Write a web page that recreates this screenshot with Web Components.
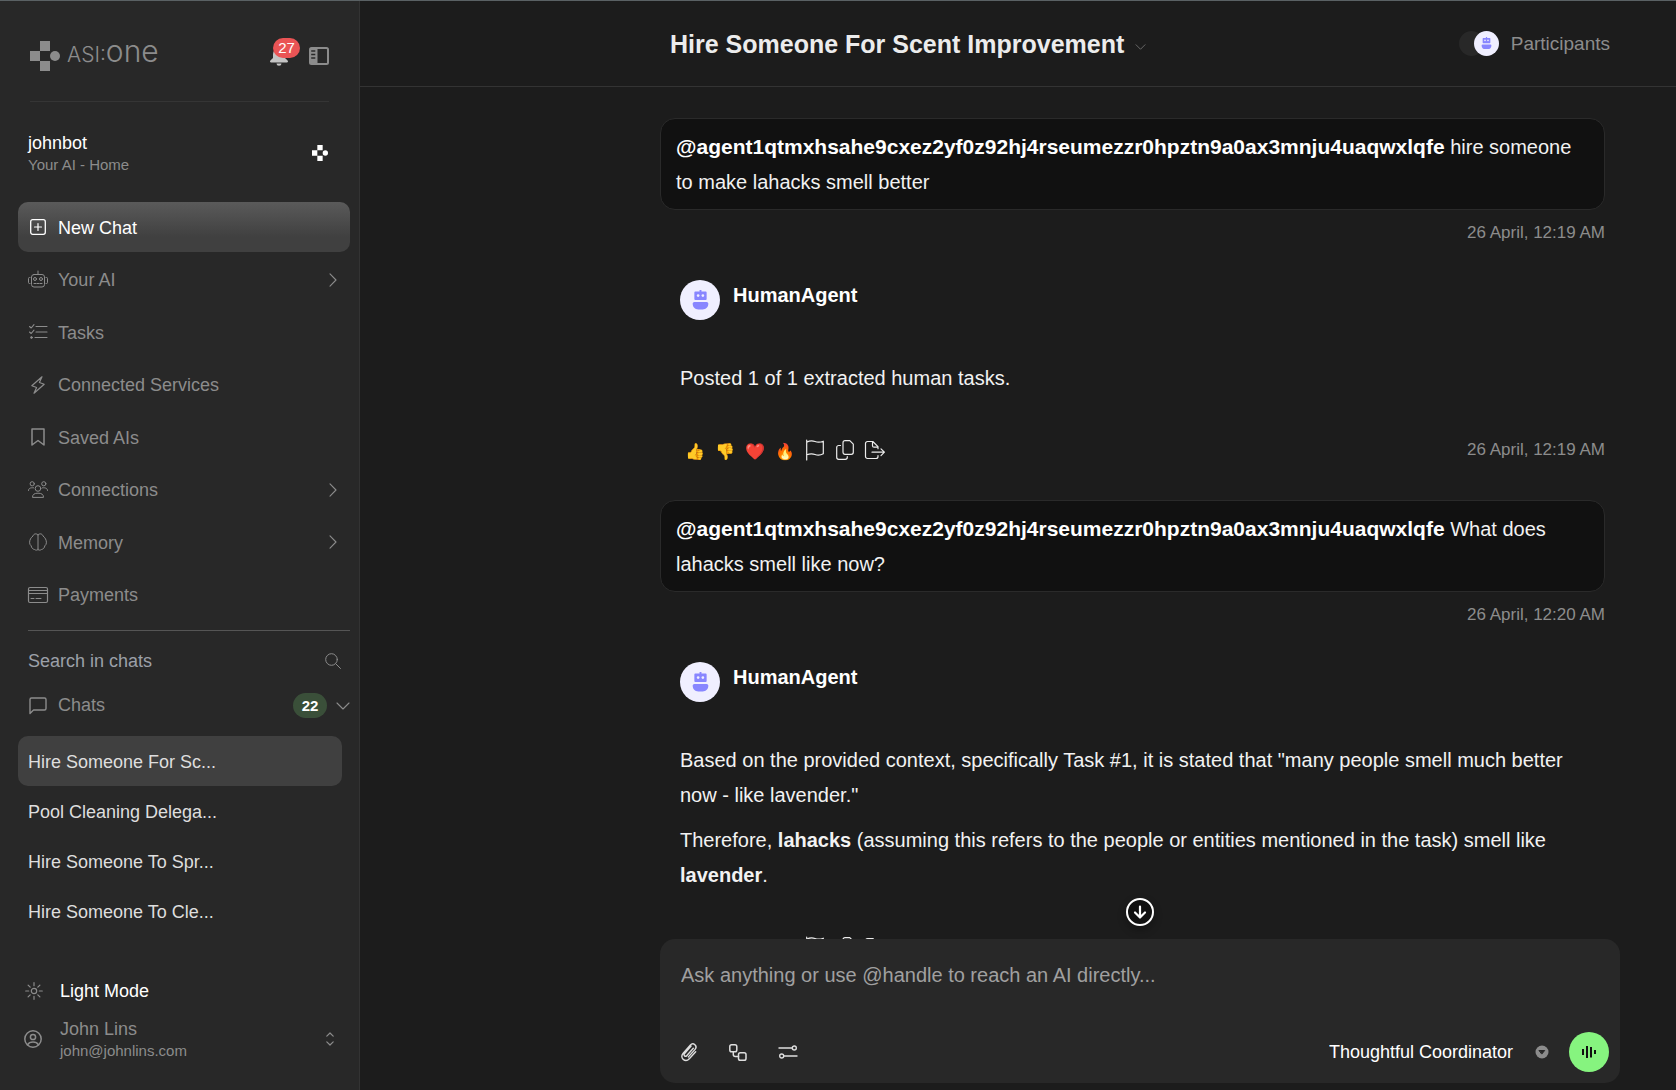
<!DOCTYPE html>
<html lang="en">
<head>
<meta charset="utf-8">
<meta name="viewport" content="width=device-width, initial-scale=1">
<title>ASI:One</title>
<style>
  html, body {
    height: 100%;
    margin: 0;
  }
  body {
    background: #1c1c1c;
    color: #fff;
    font-family: "Liberation Sans", Arial, sans-serif;
    font-size: 18px;
    overflow: hidden;
  }
</style>
</head>
<body>
<chat-app></chat-app>

<script>
// every icon of the app, [width, height, markup]
const ICONS = {
  logo: [30, 30, `<g fill="currentColor" stroke="none"><path d="M10 0h10v10H10zM0 10h10v10H0zM10 20h10v10H10z"/><circle cx="25" cy="15" r="5"/></g>`],
  bell: [18, 20, `<g fill="currentColor" stroke="none"><path d="M9 1a2 2 0 0 1 1.800 1.600C13.500 3.500 15 5.800 15 8.500V12l2.600 2.600c.8.800.4 1.900-.7 1.900H1.100c-1.100 0-1.500-1.100-.7-1.900L3 12V8.500C3 5.800 4.500 3.500 7.200 2.600A2 2 0 0 1 9 1z"/><path d="M6.500 17.500h5a2.500 2.200 0 0 1-5 0z"/></g>`],
  panel: [20, 18, `<rect x="1" y="1" width="18" height="16" rx="1.500" stroke-width="2"/><path d="M1 1h7.500v16H1z" fill="currentColor" stroke="none"/><path d="M3 4h2.500M3 7.500h2.500M3 11h2.500" stroke="#282828" stroke-width="1.600" stroke-linecap="square"/>`],
  plus: [16, 16, `<rect x=".7" y=".7" width="14.600" height="14.600" rx="2" stroke-width="1.300"/><path d="M8 4.500v7M4.500 8h7" stroke-width="1.200"/>`],
  robot: [20, 17, `<rect x="3.500" y="3.500" width="13" height="12.500" rx="2.500"/><path d="M10 0v3.500M2 6.500H1.500a1 1 0 0 0-1 1v4a1 1 0 0 0 1 1H2M18 6.500h.5a1 1 0 0 1 1 1v4a1 1 0 0 1-1 1H18M6 12.500h2M9 12.500h2M12 12.500h2"/><circle cx="7" cy="8" r="1.500"/><circle cx="13" cy="8" r="1.500"/>`],
  tasks: [18, 16, `<path d="M.5 2.500l1.700 1.500L5 .7M.5 8l1.700 1.500L5 6.200M7 2.500h11M7 8h11M6 13.500h12" stroke-width="1.100"/><circle cx="2.500" cy="13.500" r=".9" fill="currentColor"/>`],
  bolt: [14, 18, `<path d="M11 .8L.8 9.700l4.800 1.800L3 17.200l10.200-8.900-4.800-1.800z" stroke-width="1.200"/>`],
  bookmark: [14, 18, `<path d="M1 1h12v16l-6-4.500L1 17z" stroke-width="1.500"/>`],
  people: [20, 17, `<circle cx="10" cy="7.500" r="2.800"/><circle cx="4.200" cy="2.800" r="2.100"/><circle cx="15.800" cy="2.800" r="2.100"/><path d="M4.500 16c0-2.700 2-3.800 5.500-3.800s5.500 1.100 5.500 3.800zM.5 9.500C.5 7.500 2 6.500 5.500 6.800M19.500 9.500c0-2-1.500-3-5-2.700"/>`],
  brain: [18, 18, `<path d="M9 1.500v15M9 1.800C7.500.2 4.700.5 4 3 1.900 4.500.5 7 .6 9.800c.1 1.500.8 2.500 1.600 3 .2 2 1.600 3.400 3.300 3.700 1.500 1 2.800.8 3.500 0M9 1.800c1.500-1.600 4.300-1.300 5 1.200 2.100 1.500 3.500 4 3.400 6.800-.1 1.500-.8 2.500-1.600 3-.2 2-1.600 3.400-3.300 3.700-1.500 1-2.800.8-3.500 0"/>`],
  card: [20, 16, `<rect x=".5" y=".5" width="19" height="15" rx="1.500" stroke-width="1.200"/><path d="M.5 3.500h19M.5 6.500h19M3 11.500h3M8 11.500h5"/>`],
  search: [16, 16, `<circle cx="6.500" cy="6.500" r="5.800"/><path d="M10.800 10.800l4.700 4.700"/>`],
  chat: [18, 18, `<path d="M1 16.500V2.500A1.500 1.500 0 0 1 2.500 1h13A1.500 1.500 0 0 1 17 2.500v9a1.500 1.500 0 0 1-1.500 1.500H4.500z" stroke-width="1.400"/>`],
  right: [8, 14, `<path d="M1 .8L7 7l-6 6.200" stroke-width="1.100"/>`],
  down: [14, 8, `<path d="M1 1l6 6 6-6" stroke-width="1.100"/>`],
  updown: [8, 14, `<path d="M.8 4.200L4 1l3.200 3.200M.8 9.800L4 13l3.200-3.200" stroke-width="1.200"/>`],
  sun: [18, 18, `<circle cx="9" cy="9" r="2.700" stroke-width="1.200"/><path d="M9 .7v3M9 14.300v3M.7 9h3M14.300 9h3M3.100 3.100l2.100 2.100M12.800 12.800l2.100 2.100M3.100 14.900l2.100-2.100M12.800 5.200l2.100-2.100" stroke-width="1.200"/>`],
  user: [18, 18, `<circle cx="9" cy="9" r="8.200" stroke-width="1.500"/><circle cx="9" cy="7" r="2.600" stroke-width="1.500"/><path d="M3.500 14.800c1.200-2 3-2.800 5.500-2.800s4.300.8 5.500 2.800" stroke-width="1.500"/>`],
  bot: [18, 22, `<g stroke="none"><path fill="#8886ff" d="M8 0h2v2h-2zM3.500 1.500h11a1 1 0 0 1 1 1v7a1 1 0 0 1-1 1h-11a1 1 0 0 1-1-1v-7a1 1 0 0 1 1-1zM2.500 12.500h13a1.800 1.800 0 0 1 1.800 1.800c0 4-2.500 6.200-6 6.200H6.700c-3.500 0-6-2.200-6-6.200a1.800 1.800 0 0 1 1.800-1.800z"/><circle cx="6.500" cy="5.800" r="1.400" fill="#f0efff"/><circle cx="11.500" cy="5.800" r="1.400" fill="#f0efff"/></g>`],
  flag: [18, 20, `<path d="M.7 0v20M.7 2.200c3-1.600 5.800-1.600 8.300-.7s5.300.9 8.300-.3v12.600c-3 1.700-5.800 1.700-8.300.7s-5.300-.9-8.300.3" stroke-width="1.200"/>`],
  copy: [18, 20, `<path d="M9.500.7h4.300l3.500 3.500v8.100a2 2 0 0 1-2 2H9a2 2 0 0 1-2-2v-9.600a2 2 0 0 1 2-2z" stroke-width="1.200"/><path d="M4.500 5.500H2.700a2 2 0 0 0-2 2v9.800a2 2 0 0 0 2 2h6.600a2 2 0 0 0 2-2v-.8" stroke-width="1.200"/>`],
  share: [20, 18, `<path d="M13 14.500v1a2 2 0 0 1-2 2H2.500a2 2 0 0 1-2-2v-13a2 2 0 0 1 2-2h5.300L13 5.700v2M7.500.7v4a1.500 1.500 0 0 0 1.500 1.500h4M7 11.200h12.300M16 7.800l3.400 3.400-3.400 3.400" stroke-width="1.200"/>`],
  scroll: [28, 28, `<circle cx="14" cy="14" r="13" fill="#111" stroke-width="2"/><path d="M14 8.500V19M9 14.500l5 5 5-5" stroke-width="2.200"/>`],
  clip: [16, 18, `<path d="M12.300 5.300l-6.600 7.400a1.500 1.500 0 0 1-2.300-2l6.700-7.600M14.700 8.700l-6.400 7C6.500 17.700 4 17.800 2.200 16.400.4 14.800.4 12.300 2 10.500l7.200-8.200c1.300-1.500 3.300-1.700 4.700-.5 1.400 1.300 1.400 3.200.2 4.600l-6.700 7.500" stroke-width="1.400"/>`],
  flow: [18, 17, `<rect x=".8" y=".8" width="7" height="7" rx="1.800" stroke-width="1.500"/><rect x="9.500" y="8.800" width="7.500" height="7.500" rx="1.800" stroke-width="1.500"/><path d="M4.300 7.800v2.700a2 2 0 0 0 2 2h3.200" stroke-width="1.500"/>`],
  sliders: [18, 14, `<path d="M0 3h13.500M5 11h13" stroke-width="1.400"/><circle cx="15.300" cy="3" r="2" stroke-width="1.400"/><circle cx="2.700" cy="11" r="2" stroke-width="1.400"/>`],
  caret: [14, 14, `<circle cx="7" cy="7" r="6.500" fill="#8c8c8c" stroke="none"/><path d="M4.300 5.500h5.400L7 8.800z" fill="#282828" stroke="#282828"/>`],
  voice: [16, 14, `<path d="M2 4v6M6 1v12M10 2v10.500M14 5v4" stroke-width="2" stroke-linecap="butt"/>`]
};

class AppIcon extends HTMLElement {
  constructor() {
    super();
    this.attachShadow({ mode: "open" });
  }

  connectedCallback() {
    const [width, height, markup] = ICONS[this.getAttribute("name")];
    const shownWidth = Number(this.getAttribute("width")) || width;
    const shownHeight = Math.round(shownWidth * height / width);

    this.shadowRoot.innerHTML = `
      <style>
        :host { display: inline-flex; flex: none; }
        svg { display: block; overflow: visible; }
      </style>
      <svg width="${shownWidth}" height="${shownHeight}" viewBox="0 0 ${width} ${height}" fill="none"
        stroke="currentColor" stroke-linecap="round" stroke-linejoin="round" aria-hidden="true">${markup}</svg>
    `;
  }
}

customElements.define("app-icon", AppIcon);

class BotAvatar extends HTMLElement {
  constructor() {
    super();
    this.attachShadow({ mode: "open" }).innerHTML = `
      <style>
        :host {
          display: inline-flex;
          align-items: center;
          justify-content: center;
          flex: none;
          width: 40px;
          height: 40px;
          border-radius: 50%;
          background: #f0efff;
        }
        :host([small]) { width: 25px; height: 25px; }
      </style>
      <app-icon name="bot" width="${this.hasAttribute("small") ? 11 : 17}"></app-icon>
    `;
  }
}

class NavItem extends HTMLElement {
  constructor() {
    super();
    this.attachShadow({ mode: "open" });
  }

  connectedCallback() {
    this.shadowRoot.innerHTML = `
      <style>
        :host { display: block; color: #8c8c8c; }
        a {
          display: flex;
          align-items: center;
          height: 50px;
          padding: 0 13px 0 10px;
          border-radius: 10px;
          color: inherit;
          text-decoration: none;
        }
        .icon {
          display: flex;
          justify-content: center;
          width: 20px;
          margin-right: 10px;
        }
        .label { flex: 1; padding-top: 2px; }
        :host([active]) { color: #fff; }
        :host([active]) a { background: linear-gradient(#5a5a5a, #404040 70%); }
      </style>
      <a href="#">
        <span class="icon"><app-icon name="${this.getAttribute("icon")}"></app-icon></span>
        <span class="label"><slot></slot></span>
        ${this.hasAttribute("expandable") ? `<app-icon name="right"></app-icon>` : ""}
      </a>
    `;
  }
}

customElements.define("nav-item", NavItem);

class ChatLink extends HTMLElement {
  constructor() {
    super();
    this.attachShadow({ mode: "open" }).innerHTML = `
      <style>
        :host { display: block; }
        a {
          display: flex;
          align-items: center;
          box-sizing: border-box;
          height: 50px;
          padding: 2px 10px 0;
          border-radius: 10px;
          color: #dedede;
          text-decoration: none;
        }
        :host([active]) a { background: #404040; }
      </style>
      <a href="#"><slot></slot></a>
    `;
  }
}

customElements.define("chat-link", ChatLink);

class SideBar extends HTMLElement {
  constructor() {
    super();
    this.attachShadow({ mode: "open" }).innerHTML = `
      <style>
        :host {
          display: flex;
          flex-direction: column;
          box-sizing: border-box;
          width: 360px;
          flex: none;
          padding: 0 9px 0 18px;
          border-right: 1px solid #333;
          background: #282828;
          color: #8c8c8c;
        }
        button {
          display: flex;
          padding: 0;
          border: 0;
          background: none;
          color: inherit;
          font: inherit;
          text-align: left;
        }
        .top {
          display: flex;
          align-items: center;
          height: 90px;
          padding-top: 10px;
          margin: 0 21px 0 12px;
          border-bottom: 1px solid #353535;
        }
        .brand {
          display: flex;
          align-items: center;
          flex: 1;
          gap: 7px;
          color: #8c8c8c;
          text-decoration: none;
        }
        .word {
          font-family: Inter, sans-serif;
          font-weight: 300;
          font-size: 30px;
          line-height: 30px;
          padding-bottom: 7px;
        }
        .word small { font-size: 21px; }
        .bell {
          position: relative;
          margin-right: 21px;
          color: #c4c4c4;
        }
        .count {
          position: absolute;
          left: 3px;
          bottom: 8px;
          width: 27px;
          border-radius: 10px;
          background: #ea5455;
          color: #fff;
          font-size: 15px;
          line-height: 20px;
          text-align: center;
        }
        .home {
          display: flex;
          align-items: center;
          justify-content: space-between;
          padding: 30px 22px 28px 10px;
        }
        .home strong, .user strong {
          display: block;
          font-weight: 400;
          line-height: 23px;
        }
        .home strong { color: #fff; }
        small { font-size: 15px; }
        .home small, .user small {
          display: block;
          line-height: 19px;
        }
        .home app-icon { color: #fff; }
        nav {
          display: flex;
          flex-direction: column;
          justify-content: space-between;
          min-height: 418px;
        }
        .search {
          display: flex;
          align-items: center;
          margin: 10px 0 0 10px;
          padding: 15px 9px 14px 0;
          border-top: 1px solid #555;
        }
        input {
          flex: 1;
          min-width: 0;
          height: 30px;
          padding: 0;
          border: 0;
          outline: 0;
          background: none;
          color: #fff;
          font: inherit;
        }
        input::placeholder { color: #9ca0a8; }
        .chats {
          display: flex;
          align-items: center;
          padding: 3px 0 18px 11px;
        }
        .chats span { flex: 1; margin-left: 11px; }
        .chats b {
          margin-right: 9px;
          width: 34px;
          border-radius: 13px;
          background: #3a4f39;
          color: #fff;
          font-size: 15px;
          line-height: 25px;
          text-align: center;
        }
        .list { flex: 1; padding-right: 8px; }
        .mode {
          align-items: center;
          gap: 17px;
          margin: 0 0 15px 7px;
          color: #fff;
          line-height: 24px;
        }
        .mode app-icon { color: #8c8c8c; }
        .user {
          align-items: center;
          gap: 18px;
          padding: 0 16px 0 6px;
          margin-bottom: 30px;
        }
        .user div { flex: 1; }
      </style>
      <div class="top">
        <a class="brand" href="#">
          <app-icon name="logo"></app-icon>
          <span class="word"><small>ASI:</small>one</span>
        </a>
        <button class="bell" aria-label="Notifications">
          <app-icon name="bell"></app-icon>
          <span class="count">27</span>
        </button>
        <button aria-label="Toggle sidebar"><app-icon name="panel"></app-icon></button>
      </div>
      <div class="home">
        <div>
          <strong>johnbot</strong>
          <small>Your AI - Home</small>
        </div>
        <app-icon name="logo" width="16"></app-icon>
      </div>
      <nav>
        <nav-item icon="plus" active>New Chat</nav-item>
        <nav-item icon="robot" expandable>Your AI</nav-item>
        <nav-item icon="tasks">Tasks</nav-item>
        <nav-item icon="bolt">Connected Services</nav-item>
        <nav-item icon="bookmark">Saved AIs</nav-item>
        <nav-item icon="people" expandable>Connections</nav-item>
        <nav-item icon="brain" expandable>Memory</nav-item>
        <nav-item icon="card">Payments</nav-item>
      </nav>
      <div class="search">
        <input type="text" placeholder="Search in chats" aria-label="Search in chats">
        <app-icon name="search"></app-icon>
      </div>
      <button class="chats">
        <app-icon name="chat"></app-icon>
        <span>Chats</span>
        <b>22</b>
        <app-icon name="down"></app-icon>
      </button>
      <div class="list">
        <chat-link active>Hire Someone For Sc...</chat-link>
        <chat-link>Pool Cleaning Delega...</chat-link>
        <chat-link>Hire Someone To Spr...</chat-link>
        <chat-link>Hire Someone To Cle...</chat-link>
      </div>
      <button class="mode"><app-icon name="sun"></app-icon>Light Mode</button>
      <button class="user">
        <app-icon name="user"></app-icon>
        <div>
          <strong>John Lins</strong>
          <small>john@johnlins.com</small>
        </div>
        <app-icon name="updown"></app-icon>
      </button>
    `;
  }
}

class ChatHeader extends HTMLElement {
  constructor() {
    super();
    this.attachShadow({ mode: "open" }).innerHTML = `
      <style>
        :host {
          display: flex;
          align-items: center;
          justify-content: space-between;
          height: 85px;
          flex: none;
          padding: 0 66px 0 310px;
          border-bottom: 1px solid #333;
        }
        button {
          display: flex;
          align-items: center;
          padding: 0;
          border: 0;
          background: none;
          color: #8c8c8c;
          font: inherit;
        }
        h1 {
          margin: 0 11px 0 0;
          color: #ececec;
          font-size: 25px;
          line-height: 30px;
        }
        .title { color: #777; }
        .title app-icon { padding-top: 6px; }
        .people { gap: 12px; font-size: 19px; }
        .stack { display: flex; }
        .blank {
          width: 25px;
          height: 25px;
          margin-right: -10px;
          border-radius: 50%;
          background: #282828;
        }
      </style>
      <button class="title">
        <h1><slot></slot></h1>
        <app-icon name="down" width="11"></app-icon>
      </button>
      <button class="people">
        <span class="stack"><span class="blank"></span><bot-avatar small></bot-avatar></span>
        Participants
      </button>
    `;
  }
}

class UserMessage extends HTMLElement {
  constructor() {
    super();
    this.attachShadow({ mode: "open" });
  }

  connectedCallback() {
    this.shadowRoot.innerHTML = `
      <style>
        :host { display: block; }
        .bubble {
          padding: 11px 15px 9px;
          border: 1px solid #2a2a2a;
          border-radius: 15px;
          background: #111;
          color: #f2f2f2;
          font-size: 20px;
          line-height: 35px;
        }
        /* the larger mention must not make its line taller */
        ::slotted(b) { color: #fff; font-size: 21px; line-height: 1; }
        time {
          display: block;
          margin-top: 10px;
          color: #8c8c8c;
          font-size: 17px;
          line-height: 25px;
          text-align: right;
        }
      </style>
      <div class="bubble"><slot></slot></div>
      <time>${this.getAttribute("time")}</time>
    `;
  }
}

class AgentMessage extends HTMLElement {
  constructor() {
    super();
    this.attachShadow({ mode: "open" });
  }

  connectedCallback() {
    this.shadowRoot.innerHTML = `
      <style>
        :host { display: block; padding: 35px 0 40px 20px; }
        .head { display: flex; gap: 13px; }
        h2 {
          margin: 0;
          font-size: 20px;
          line-height: 30px;
        }
        .body {
          display: flex;
          flex-direction: column;
          gap: 10px;
          margin: 41px 15px 44px 0;
          color: #f2f2f2;
          font-size: 20px;
          line-height: 35px;
        }
        ::slotted(p) { margin: 0; }
        .actions {
          display: flex;
          align-items: center;
          height: 20px;
        }
        button {
          display: flex;
          align-items: center;
          justify-content: center;
          width: 30px;
          height: 20px;
          padding: 0;
          border: 0;
          background: none;
          color: #ececec;
          font-size: 16px;
          line-height: 20px;
        }
        .emoji { padding-top: 3px; }
        time { margin-left: auto; color: #8c8c8c; font-size: 17px; }
      </style>
      <div class="head"><bot-avatar></bot-avatar><h2>${this.getAttribute("name")}</h2></div>
      <div class="body"><slot></slot></div>
      <div class="actions">
        <button class="emoji" aria-label="Like">👍</button>
        <button class="emoji" aria-label="Dislike">👎</button>
        <button class="emoji" aria-label="Love">❤️</button>
        <button class="emoji" aria-label="Fire">🔥</button>
        <button aria-label="Report"><app-icon name="flag"></app-icon></button>
        <button aria-label="Copy"><app-icon name="copy"></app-icon></button>
        <button aria-label="Share"><app-icon name="share"></app-icon></button>
        <time>${this.getAttribute("time")}</time>
      </div>
    `;
  }
}

class ChatComposer extends HTMLElement {
  constructor() {
    super();
    this.attachShadow({ mode: "open" }).innerHTML = `
      <style>
        :host { display: block; position: relative; }
        form {
          padding: 20px 11px 11px 21px;
          border-radius: 15px;
          background: #282828;
        }
        textarea {
          display: block;
          box-sizing: border-box;
          width: 100%;
          height: 73px;
          padding: 0;
          border: 0;
          outline: 0;
          resize: none;
          background: none;
          color: #fff;
          font: inherit;
          font-size: 20px;
          line-height: 32px;
        }
        textarea::placeholder { color: #a0a0a0; }
        .tools { display: flex; align-items: center; }
        button {
          display: flex;
          align-items: center;
          justify-content: center;
          padding: 0;
          border: 0;
          background: none;
          color: #dedede;
        }
        .left { display: flex; gap: 32px; flex: 1; }
        select {
          appearance: none;
          padding: 0;
          border: 0;
          background: none;
          color: #fff;
          font: inherit;
        }
        .pick {
          display: flex;
          align-items: center;
          gap: 21px;
          margin-right: 20px;
        }
        .send {
          width: 40px;
          height: 40px;
          border-radius: 50%;
          background: #86f47f;
          color: #111;
        }
        .scroll {
          position: absolute;
          bottom: calc(100% + 13px);
          left: calc(50% - 14px);
          border-radius: 50%;
          color: #fff;
          box-shadow: 0 4px 8px rgba(0, 0, 0, 0.3);
        }
      </style>
      <button class="scroll" aria-label="Scroll to bottom"><app-icon name="scroll"></app-icon></button>
      <form>
        <textarea placeholder="Ask anything or use @handle to reach an AI directly..." aria-label="Message"></textarea>
        <div class="tools">
          <div class="left">
            <button type="button" aria-label="Attach file"><app-icon name="clip"></app-icon></button>
            <button type="button" aria-label="Workflow"><app-icon name="flow"></app-icon></button>
            <button type="button" aria-label="Settings"><app-icon name="sliders"></app-icon></button>
          </div>
          <label class="pick">
            <select aria-label="Personality"><option>Thoughtful Coordinator</option></select>
            <app-icon name="caret"></app-icon>
          </label>
          <button type="button" class="send" aria-label="Voice"><app-icon name="voice"></app-icon></button>
        </div>
      </form>
    `;
  }
}

class ChatApp extends HTMLElement {
  constructor() {
    super();
    this.attachShadow({ mode: "open" }).innerHTML = `
      <style>
        :host {
          display: flex;
          box-sizing: border-box;
          height: 100vh;
          border-top: 1px solid #5a6164;
        }
        main {
          display: flex;
          flex-direction: column;
          flex: 1;
          min-width: 0;
        }
        .messages {
          flex: 1;
          min-height: 0;
          overflow: hidden;
          padding: 31px 71px 0 300px;
        }
        chat-composer { margin: 0 56px 7px 300px; }
      </style>
      <side-bar></side-bar>
      <main>
        <chat-header>Hire Someone For Scent Improvement</chat-header>
        <div class="messages">
          <user-message time="26 April, 12:19 AM"><b>@agent1qtmxhsahe9cxez2yf0z92hj4rseumezzr0hpztn9a0ax3mnju4uaqwxlqfe</b> hire someone to make lahacks smell better</user-message>
          <agent-message name="HumanAgent" time="26 April, 12:19 AM">
            <p>Posted 1 of 1 extracted human tasks.</p>
          </agent-message>
          <user-message time="26 April, 12:20 AM"><b>@agent1qtmxhsahe9cxez2yf0z92hj4rseumezzr0hpztn9a0ax3mnju4uaqwxlqfe</b> What does lahacks smell like now?</user-message>
          <agent-message name="HumanAgent" time="26 April, 12:20 AM">
            <p>Based on the provided context, specifically Task #1, it is stated that "many people smell much better now - like lavender."</p>
            <p>Therefore, <b>lahacks</b> (assuming this refers to the people or entities mentioned in the task) smell like <b>lavender</b>.</p>
          </agent-message>
        </div>
        <chat-composer></chat-composer>
      </main>
    `;
  }
}

customElements.define("bot-avatar", BotAvatar);
customElements.define("side-bar", SideBar);
customElements.define("chat-header", ChatHeader);
customElements.define("user-message", UserMessage);
customElements.define("agent-message", AgentMessage);
customElements.define("chat-composer", ChatComposer);
customElements.define("chat-app", ChatApp);
</script>
</body>
</html>
